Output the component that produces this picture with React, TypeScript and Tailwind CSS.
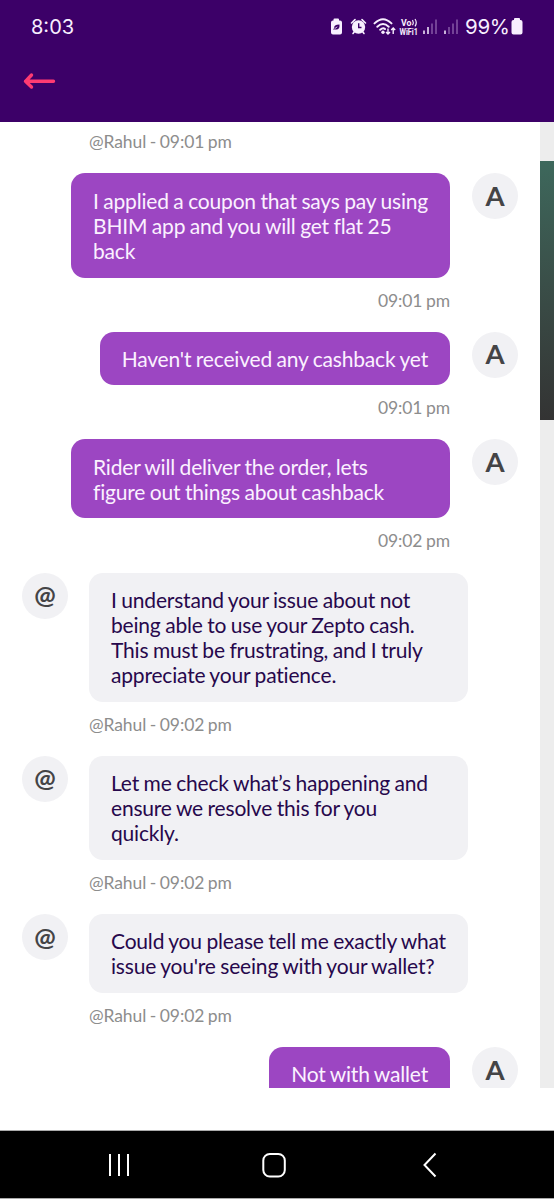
import clsx from "clsx";

interface Message {
  from: "user" | "agent";
  lines: string[];
  time?: string;
}

const messages: Message[] = [
  {
    from: "user",
    lines: [
      "I applied a coupon that says pay using",
      "BHIM app and you will get flat 25",
      "back",
    ],
    time: "09:01 pm",
  },
  {
    from: "user",
    lines: ["Haven't received any cashback yet"],
    time: "09:01 pm",
  },
  {
    from: "user",
    lines: [
      "Rider will deliver the order, lets",
      "figure out things about cashback",
    ],
    time: "09:02 pm",
  },
  {
    from: "agent",
    lines: [
      "I understand your issue about not",
      "being able to use your Zepto cash.",
      "This must be frustrating, and I truly",
      "appreciate your patience.",
    ],
    time: "@Rahul - 09:02 pm",
  },
  {
    from: "agent",
    lines: [
      "Let me check what’s happening and",
      "ensure we resolve this for you",
      "quickly.",
    ],
    time: "@Rahul - 09:02 pm",
  },
  {
    from: "agent",
    lines: [
      "Could you please tell me exactly what",
      "issue you're seeing with your wallet?",
    ],
    time: "@Rahul - 09:02 pm",
  },
  { from: "user", lines: ["Not with wallet"] },
];

function StatusIcons() {
  return (
    <svg width="134" height="24" viewBox="0 0 134 24" fill="none">
      {/* battery saver */}
      <path
        d="M3.500 4.500V3.500Q3.500 2.500 4.500 2.500H8Q9 2.500 9 3.500V4.500H10Q12 4.500 12 6.500V16.500Q12 18.500 10 18.500H3Q1 18.500 1 16.500V6.500Q1 4.500 3 4.500Z"
        fill="#f8efff"
      />
      <path d="M3 13.500L4.300 12Q3.500 8.500 9.500 8.500Q10 14 5.500 13.500Z" fill="#3c0068" />
      <path d="M4.500 12.800L7.300 10.800" stroke="#f8efff" strokeWidth=".8" />
      {/* alarm */}
      <circle cx="28.500" cy="11" r="6.700" fill="#f8efff" />
      <path
        d="M21.500 7L25 3.600M35.500 7L32 3.600M24.500 15.500L23 17.500M32.500 15.500L34 17.500"
        stroke="#f8efff"
        strokeWidth="1.600"
        strokeLinecap="round"
      />
      <path d="M28.700 7.300V11.500H31.500" stroke="#3c0068" strokeWidth="1.400" />
      {/* wifi */}
      <path
        d="M44.500 7.400Q53 -1 61.500 7.400M47.300 10.800Q53 5.300 58.700 10.800M50.200 13.800Q53 11.200 55 13"
        stroke="#f8efff"
        strokeWidth="1.900"
        strokeLinecap="round"
      />
      <circle cx="53" cy="16.300" r="1.700" fill="#f8efff" />
      <path
        d="M58 12.500V18M56 16L58 18L60 16M63.200 18V12M61.200 14L63.200 12L65.200 14"
        stroke="#f8efff"
        strokeWidth="1.400"
      />
      {/* call over wifi */}
      <g fill="#f8efff" fontFamily="Roboto, sans-serif" fontWeight="700">
        <text x="71" y="9.500" fontSize="9" textLength="10.500" lengthAdjust="spacingAndGlyphs">
          Vo
        </text>
        <text x="69.500" y="18.500" fontSize="9" textLength="18.500" lengthAdjust="spacingAndGlyphs">
          WiFi1
        </text>
      </g>
      <path
        d="M82.500 4Q84 6.500 82.500 9.300M85 3Q87.500 6.500 85 10.300"
        stroke="#f8efff"
        strokeWidth="1.200"
      />
      {/* signal bars */}
      <path d="M94 14.500V18M98 11V18" stroke="#f8efff" strokeWidth="1.500" />
      <path d="M102 7.500V18M106 3.500V18" stroke="#8558a5" strokeWidth="1.500" />
      <path d="M115 14.500V18" stroke="#f8efff" strokeWidth="1.500" />
      <path
        d="M119 11V18M123 7.500V18M127 3.500V18"
        stroke="#8558a5"
        strokeWidth="1.500"
      />
    </svg>
  );
}

function Header() {
  return (
    <header className="flex h-[122px] shrink-0 flex-col bg-[#3c0068]">
      <div className="flex h-[54px] items-center px-[31px] font-['Inter',sans-serif] text-[#f8efff]">
        <span className="mr-auto text-[20px] leading-none">8:03</span>
        <div className="flex h-6 pt-px">
          <StatusIcons />
        </div>
        <span className="ml-px w-[44px] whitespace-nowrap text-[20.500px] leading-none tracking-[-0.300px]">
          99%
        </span>
        <svg
          width="12"
          height="18"
          viewBox="0 0 12 18"
          className="ml-[2px]"
          fill="currentColor"
        >
          <path d="M3 2V1Q3 0 4 0H8Q9 0 9 1V2H9.500Q11.500 2 11.500 4V14.500Q11.500 16.500 9.500 16.500H2.500Q.5 16.500 .5 14.500V4Q.5 2 2.500 2Z" />
        </svg>
      </div>
      <button className="ml-[23px] mt-[18px] w-fit" aria-label="Back">
        <svg
          width="33"
          height="18"
          viewBox="0 0 33 18"
          fill="none"
          stroke="#ff3b72"
          strokeWidth="3.400"
          strokeLinecap="round"
          strokeLinejoin="round"
        >
          <path d="M30.500 9.300H2.500M8.500 3L2.500 9.300L8.500 15" />
        </svg>
      </button>
    </header>
  );
}

function Avatar({ label }: { label: string }) {
  return (
    <div
      className={clsx(
        "flex size-[46px] shrink-0 items-center justify-center rounded-full bg-[#f1f1f4] pb-px font-bold leading-none text-[#444446]",
        label === "@" ? "text-[25.500px]" : "text-[27.500px]"
      )}
    >
      {label}
    </div>
  );
}

function ChatMessage({ from, lines, time }: Message) {
  const isUser = from === "user";

  return (
    <div
      className={clsx(
        "flex",
        isUser ? "justify-end gap-[22px] pr-[22px]" : "gap-[21px] pl-[22px]"
      )}
    >
      {!isUser && <Avatar label="@" />}
      <div className={clsx("flex flex-col", isUser && "items-end")}>
        <div
          className={clsx(
            "rounded-[14px] px-[22px] py-[14.4px] text-[21px] leading-[25.1px] tracking-[-0.190px] [word-spacing:-0.600px]",
            isUser ? "bg-[#9c46c2] text-[#fbf1ff]" : "bg-[#f1f1f4] text-[#27084c]",
            lines.length > 1 && "w-[379px]"
          )}
        >
          {lines.map((line) => (
            <p key={line} className="whitespace-nowrap">
              {line}
            </p>
          ))}
        </div>
        {time && <Time>{time}</Time>}
      </div>
      {isUser && <Avatar label="A" />}
    </div>
  );
}

function Time({ children }: { children: React.ReactNode }) {
  return (
    <span className="h-[54.050px] pt-[12px] text-[17.500px] leading-[22px] tracking-[-0.100px] text-[#8d8d8d] [word-spacing:-0.8px]">
      {children}
    </span>
  );
}

function NavBar() {
  return (
    <nav className="flex h-[69px] shrink-0 items-center border-y border-[#aaa] bg-black pl-[107px]">
      <svg width="24" height="26" stroke="#fff" strokeWidth="2">
        <path d="M3 2V24M12 2V24M21 2V24" />
      </svg>
      <svg
        width="26"
        height="26"
        className="ml-[130px]"
        fill="none"
        stroke="#fff"
        strokeWidth="2"
      >
        <rect x="2.300" y="2" width="21.500" height="22.500" rx="6.500" />
      </svg>
      <svg
        width="16"
        height="26"
        className="ml-[134px]"
        fill="none"
        stroke="#fff"
        strokeWidth="2"
      >
        <path d="M14.500 1.500L3.500 13L14.500 24.500" />
      </svg>
    </nav>
  );
}

export default function App() {
  return (
    <div className="flex h-[1200px] w-[554px] flex-col overflow-hidden bg-white font-['Lato',sans-serif]">
      <Header />

      <div className="flex h-[966px] shrink-0">
        <main className="h-full w-[540px] overflow-hidden">
          <div className="-mt-[2.600px] flex flex-col">
            <div className="flex pl-[89px]">
              <Time>@Rahul - 09:01 pm</Time>
            </div>
            {messages.map((message, index) => (
              <ChatMessage key={index} {...message} />
            ))}
          </div>
        </main>
        <aside className="flex-1 bg-[#ededed] pt-[39px]">
          <div className="h-[259px] bg-linear-to-b from-[#3d685c] to-[#333]" />
        </aside>
      </div>

      <div className="h-[42px] shrink-0" />
      <NavBar />
    </div>
  );
}
